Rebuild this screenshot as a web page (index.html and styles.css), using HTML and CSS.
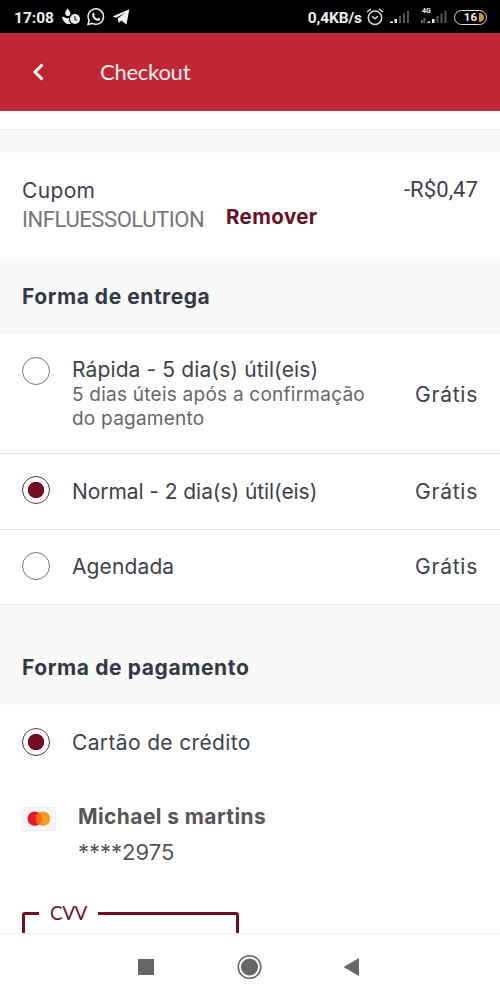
FILE: index.html
```
<!DOCTYPE html>
<html lang="pt-BR">
<head>
<meta charset="utf-8">
<meta name="viewport" content="width=device-width">
<title>Checkout</title>
<link rel="stylesheet" href="styles.css">
</head>
<body>
<div class="screen">
  <div class="status">
    <span class="clock">17:08</span>
    <svg class="ico-app" width="18" height="18" viewBox="0 0 18 18" fill="#eee"><path d="M5 0C6 2 8.500 3 8.500 5.500C8.500 7.500 7 8 6 8C4 8 2.800 6.500 3.200 4.500C3.500 3 5 2 5 0ZM0 9C2 8 3 10 5 10.500L7.500 9.500C6.500 12 7 14 9 15.500C5 17.500 1 14 0 9Z"/><circle cx="13" cy="11" r="5"/><path d="M13 8.200V11.500L15 12.500" fill="none" stroke="#222" stroke-width="1.200"/></svg>
    <svg class="ico-wa" width="18" height="18" viewBox="0 0 18 18"><path d="M1 16.500L2.200 12.500A7.700 7.700 0 1 1 5.300 15.400Z" fill="none" stroke="#eee" stroke-width="1.500"/><path d="M5.700 5Q6.300 4.200 7 5L7.800 6.700L7.100 7.800Q8.200 10 10.300 10.700L11.300 9.800L13.200 10.800Q13.300 13.200 10.800 13Q5.400 11.500 5.200 7Q5.200 5.700 5.700 5Z" fill="#eee"/></svg>
    <svg class="ico-tg" width="18" height="16" viewBox="0 0 18 16"><path d="M0.500 7.500L17.300 0.300L14.500 15.500L9.200 11.600L6.700 14L5.700 9.500L13.500 3.500L4.300 8.800Z" fill="#f4f4f4"/></svg>
    <span class="speed">0,4KB/s</span>
    <svg class="ico-alarm" width="18" height="18" viewBox="0 0 18 18" fill="none" stroke="#ddd" stroke-width="1.500"><circle cx="9" cy="9.700" r="6.700"/><path d="M1 4L5 1M13 1L17 4M6 8.200L9 10.800L12 8.200"/></svg>
    <svg class="ico-signal" width="20" height="14" viewBox="0 0 20 14"><path d="M0 13V11.500H3V13ZM4.500 13V9H7V13Z" fill="#eee"/><path d="M9 13V6H11V13ZM13 13V3.500H15V13ZM17 13V1H19V13Z" fill="#555"/></svg>
    <div class="net"><span class="net-label">4G</span>
      <svg class="net-bars" width="27" height="14" viewBox="0 0 27 14"><path d="M0 10H1.500V13H0ZM2.500 8.500H4.500V10H3.700V13H2.500Z" fill="#888"/><path d="M6.500 13V11.500H9V13ZM11 13V9H13.500V13Z" fill="#eee"/><path d="M15.500 13V6H17.500V13ZM19.500 13V3.500H21.500V13ZM23.500 13V1H25.500V13Z" fill="#555"/></svg>
    </div>
    <div class="battery"><span>16</span><svg width="5" height="9" viewBox="0 0 5 9"><path d="M0 0H1Q5 1 5 4.500Q5 8 1 9H0Z" fill="#c99a3c"/></svg></div>
  </div>

  <header class="appbar">
    <svg width="12" height="18" viewBox="0 0 12 18"><path d="M10.500 1.500L3 9L10.500 16.500" fill="none" stroke="#fff4f0" stroke-width="3"/></svg>
    <h1>Checkout</h1>
  </header>

  <main class="content">
    <div class="previous"></div>
    <div class="gap"></div>
    <section class="coupon">
      <div class="coupon-info">
        <span class="coupon-title">Cupom</span>
        <span class="coupon-code">INFLUESSOLUTION</span>
      </div>
      <a class="remove">Remover</a>
      <span class="discount">-R$0,47</span>
    </section>

    <h2 class="section delivery">Forma de entrega</h2>
    <div class="option tall">
      <span class="radio"></span>
      <div class="label">Rápida - 5 dia(s) útil(eis)<p class="hint">5 dias úteis após a confirmação<br>do pagamento</p></div>
      <span class="price">Grátis</span>
    </div>
    <div class="option">
      <span class="radio checked"></span>
      <div class="label normal">Normal - 2 dia(s) útil(eis)</div>
      <span class="price">Grátis</span>
    </div>
    <div class="option">
      <span class="radio"></span>
      <div class="label">Agendada</div>
      <span class="price">Grátis</span>
    </div>

    <h2 class="section payment">Forma de pagamento</h2>
    <div class="method">
      <span class="radio checked"></span>
      <div class="label credit">Cartão de crédito</div>
    </div>
    <div class="card">
      <svg class="brand" width="34" height="24" viewBox="0 0 34 24"><rect x=".5" y=".5" width="33" height="23" rx="1" fill="#f6f6f8" stroke="#eeeef0"/><circle cx="12.700" cy="11.700" r="7.200" fill="#e31d2b"/><circle cx="21" cy="11.700" r="7.200" fill="#f59b23"/><path d="M16.850 5.800A7.200 7.200 0 0 1 16.850 17.600A7.200 7.200 0 0 1 16.850 5.800Z" fill="#f36a1d"/></svg>
      <div><div class="holder">Michael s martins</div><div class="digits">****2975</div></div>
    </div>
    <fieldset class="cvv"><legend>CVV</legend></fieldset>
  </main>

  <nav class="nav">
    <svg width="500" height="65" viewBox="0 0 500 65" fill="#666"><rect x="138" y="25" width="16" height="16"/><circle cx="249.500" cy="33" r="11.300" fill="none" stroke="#666" stroke-width="1.600"/><circle cx="249.500" cy="33" r="8.600"/><path d="M343.500 33L359 24V42Z"/></svg>
  </nav>
</div>
</body>
</html>
```
FILE: styles.css
```
* { box-sizing: border-box; }
body { margin: 0; background: #fff; color: #3d424b; font-family: Inter, "Liberation Sans", sans-serif; }
h1, h2, p { margin: 0; font-weight: inherit; }
.screen { width: 500px; height: 1000px; display: flex; flex-direction: column; overflow: hidden; }

.status { height: 33px; flex: none; background: #000; color: #eee; display: flex; align-items: center; padding: 1px 13px 0 14px; font: 700 15.5px/20px Roboto, sans-serif; }
.clock, .speed { padding-top: 1px; }
.ico-app { margin-left: 8px; }
.ico-wa { margin-left: 7px; }
.ico-tg { margin-left: 7px; }
.speed { margin-left: auto; letter-spacing: -.1px; }
.ico-alarm { margin-left: 4px; }
.ico-signal { margin-left: 6px; }
.net { position: relative; margin-left: 11px; width: 27px; height: 14px; }
.net-bars { display: block; }
.net-label { position: absolute; left: 1px; top: -4px; font-size: 7px; line-height: 10px; }
.battery { width: 33px; height: 15px; margin-left: 6px; border: 1.5px solid #ddd; border-radius: 8px; display: flex; align-items: center; justify-content: flex-end; gap: 2px; padding-right: 2px; font-size: 11.5px; line-height: 12px; }

.appbar { height: 78px; flex: none; background: #c02736; color: #fff0ec; display: flex; align-items: center; padding-left: 32px; gap: 56px; }
.appbar h1 { font: 400 22px/26px Lato, sans-serif; letter-spacing: -.25px; margin-top: -1px; }

.content { flex: 1; min-height: 0; overflow: hidden; }
.previous { height: 19px; border-bottom: 1px solid #ededed; }
.gap { height: 23px; background: #f9f9f9; }
.coupon { height: 104px; display: flex; align-items: flex-start; padding: 22px 22px 0 22px; }
.coupon-info { display: flex; flex-direction: column; width: 204px; }
.coupon-title { font-size: 21px; line-height: 30px; letter-spacing: .35px; padding-top: 1px; }
.coupon-code { font: 400 22px/28px Roboto, sans-serif; color: #777; letter-spacing: -.42px; }
.remove { margin-top: 29px; font-size: 20.5px; line-height: 26px; font-weight: 700; color: #6b0f25; letter-spacing: .4px; }
.discount { margin-left: auto; font: 400 22px/29px Roboto, sans-serif; letter-spacing: .1px; }

.section { background: #f9f9f9; color: #333846; font-size: 21px; line-height: 27px; font-weight: 700; padding-left: 22px; }
.delivery { height: 77px; padding-top: 26px; letter-spacing: .54px; }
.payment { height: 100px; padding-top: 49px; letter-spacing: .6px; }
.option { height: 75.5px; border-bottom: 1px solid #e6e6e6; display: flex; align-items: center; padding: 0 22px; }
.option.tall { height: 120px; align-items: flex-start; padding-top: 22px; }
.radio { width: 28px; height: 28px; flex: none; margin-right: 22px; border: 1.4px solid #777; border-radius: 50%; }
.option .radio { margin-top: -2px; }
.option.tall .radio { margin-top: 1px; }
.radio.checked { border-color: #742b3e; background: radial-gradient(circle, #730c20 7.8px, transparent 8.5px); }
.label { font-size: 21px; line-height: 26px; letter-spacing: .12px; padding-top: 1px; }
.normal { letter-spacing: -.07px; }
.credit { letter-spacing: .36px; padding-top: 2px; }
.hint { font-size: 19px; line-height: 24px; letter-spacing: .24px; color: #666; }
.price { margin-left: auto; font-size: 21px; letter-spacing: .75px; line-height: 26px; padding-top: 1px; }
.tall .price { margin-top: 25px; }
.method { height: 73px; display: flex; align-items: center; padding-left: 22px; }
.card { display: flex; padding: 24px 0 0 22px; gap: 22px; color: #565656; }
.brand { margin-top: 5px; }
.holder { font-size: 21px; line-height: 27px; font-weight: 700; letter-spacing: .4px; padding-top: 1px; }
.digits { font-size: 22px; line-height: 28px; margin-top: 8px; }
.cvv { width: 217px; height: 70px; margin: 35px 0 0 22px; padding: 0; border: 3px solid #6d1025; border-radius: 3px; color: #6d1025; }
.cvv legend { margin-left: 14px; padding: 0 11px; font: 400 19px/24px Lato, sans-serif; letter-spacing: -.5px; }

.nav { height: 67px; flex: none; border-top: 1px solid #eee; background: #fff; }
.nav svg { display: block; }
```
